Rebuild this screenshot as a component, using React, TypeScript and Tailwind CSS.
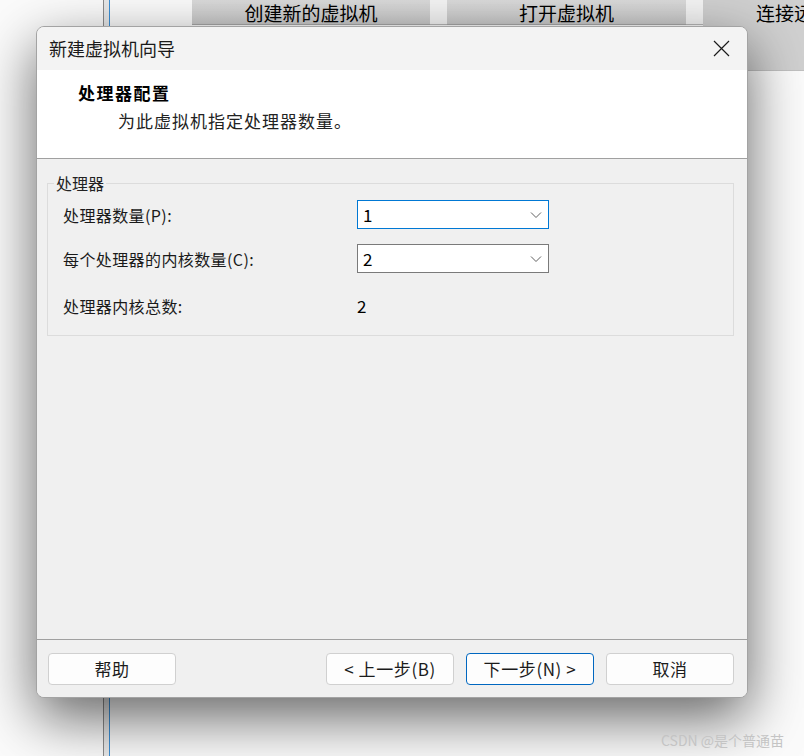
import React from "react";

const FONT = "font-['Noto_Sans_CJK_SC','Noto_Sans',sans-serif]";

function Chevron() {
  return (
    <svg width="12" height="8" viewBox="0 0 12 8" className="text-[#606060]">
      <polyline
        points="1,1.5 6,6.5 11,1.5"
        fill="none"
        stroke="currentColor"
        strokeWidth="1"
      />
    </svg>
  );
}

function Combo({ value, focused }: { value: string; focused?: boolean }) {
  return (
    <div
      className={`w-[192px] h-[29px] bg-white border flex items-center justify-between pl-[5px] pr-[6px] ${
        focused ? "border-[#0078d4]" : "border-[#7a7a7a]"
      }`}
    >
      <span className="text-[17px] text-black leading-none">{value}</span>
      <Chevron />
    </div>
  );
}

function WizButton({
  label,
  primary,
  className = "",
}: {
  label: string;
  primary?: boolean;
  className?: string;
}) {
  return (
    <button
      className={`w-[128px] h-[32px] rounded-[4px] bg-[#fdfdfd] border text-[17px] tracking-[0.6px] text-[#1b1b1b] flex items-center justify-center ${
        primary ? "border-[#0067c0]" : "border-[#d0d0d0]"
      } ${className}`}
    >
      {label}
    </button>
  );
}

export default function App() {
  return (
    <div
      className={`relative w-[804px] h-[756px] overflow-hidden bg-[#fbfbfb] ${FONT}`}
    >
      {/* toolbar tabs behind the dialog */}
      <div className="flex items-start">
        <div className="shrink-0 w-[192px] h-[25px]" />
        <div className="shrink-0 w-[238px] h-[25px] bg-gradient-to-b from-[#dadada] to-[#cacaca] border-b border-[#a8a8a8] flex items-center justify-center text-[19px] leading-[19px] text-black">
          创建新的虚拟机
        </div>
        <div className="shrink-0 w-[17px] h-[25px] bg-[#f4f4f4] border-b border-[#b8b8b8]" />
        <div className="shrink-0 w-[239px] h-[25px] bg-gradient-to-b from-[#dadada] to-[#cacaca] border-b border-[#a8a8a8] flex items-center justify-center text-[19px] leading-[19px] text-black">
          打开虚拟机
        </div>
        <div className="shrink-0 w-[17px] h-[25px] bg-[#f4f4f4] border-b border-[#b8b8b8]" />
        <div className="shrink-0 w-[239px] h-[71px] bg-[#d0d0d0] border-b border-[#c0c0c0]">
          <div className="h-[25px] flex items-center justify-center text-[19px] leading-[19px] text-black whitespace-nowrap">
            连接远程服务器
          </div>
        </div>
      </div>

      {/* side panel edge */}
      <div className="absolute left-[103px] top-0 bottom-0 w-[7px] border-l border-[#8c8c8c] border-r border-r-[#3a8fd6] bg-[#e9e9e9]" />

      {/* dialog window */}
      <div className="absolute left-[36px] top-[26px] w-[712px] h-[672px] flex flex-col rounded-[8px] border border-[#a3a3a3] bg-[#f0f0f0] shadow-[0_20px_56px_rgba(0,0,0,0.6)] overflow-hidden">
        <div className="h-[43px] shrink-0 bg-[#f3f3f3] flex items-center justify-between pl-[12px] pr-[17px]">
          <span className="text-[18px] text-[#1a1a1a]">新建虚拟机向导</span>
          <svg width="17" height="17" viewBox="0 0 17 17">
            <path d="M1 1 L16 16 M16 1 L1 16" stroke="#1a1a1a" strokeWidth="1.2" />
          </svg>
        </div>

        <div className="h-[88px] shrink-0 bg-white pl-[41px] pt-[11px]">
          <div className="text-[17px] font-bold tracking-[1.5px] text-black leading-[24px]">
            处理器配置
          </div>
          <div className="mt-[4px] ml-[40px] text-[17px] tracking-[1px] text-[#222] leading-[24px]">
            为此虚拟机指定处理器数量。
          </div>
        </div>
        <div className="h-px shrink-0 bg-[#a0a0a0]" />

        <div className="flex-1 pl-[10px] pr-[13px]">
          <fieldset className="mt-[13px] border border-[#dcdcdc] pl-[15px] pb-[15px]">
            <legend className="-ml-[9px] px-[2px] text-[16px] leading-[22px] text-[#222]">
              处理器
            </legend>
            <div className="grid grid-cols-[294px_192px] items-center text-[16px] tracking-[0.4px] text-[#1a1a1a]">
              <span className="mt-[6px]">处理器数量(P):</span>
              <div className="mt-[6px]">
                <Combo value="1" focused />
              </div>
              <span className="mt-[15px]">每个处理器的内核数量(C):</span>
              <div className="mt-[15px]">
                <Combo value="2" />
              </div>
              <span className="mt-[18px] h-[29px] flex items-center">处理器内核总数:</span>
              <span className="mt-[18px] h-[29px] flex items-center text-[17px] text-black">2</span>
            </div>
          </fieldset>
        </div>

        <div className="h-px shrink-0 bg-[#a0a0a0]" />
        <div className="h-[57px] shrink-0 flex items-start pt-[13px] pl-[11px] pr-[13px] bg-[#f0f0f0]">
          <WizButton label="帮助" />
          <div className="flex-1" />
          <WizButton label="< 上一步(B)" />
          <WizButton label="下一步(N) >" primary className="ml-[12px]" />
          <WizButton label="取消" className="ml-[12px]" />
        </div>
      </div>

      {/* watermark */}
      <div className="absolute left-[661px] top-[730px] text-[14px] text-[#c4c4c4] whitespace-nowrap">
        CSDN @是个普通苗
      </div>
    </div>
  );
}
